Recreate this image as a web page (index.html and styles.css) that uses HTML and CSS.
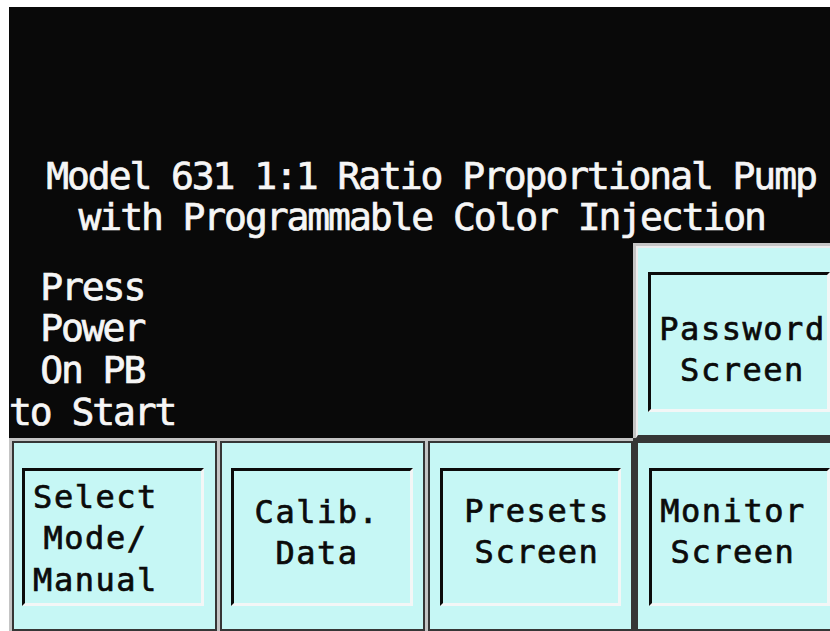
FILE: index.html
```html
<!DOCTYPE html>
<html lang="en">
<head>
<meta charset="utf-8">
<title>Model 631 Pump</title>
<link rel="stylesheet" href="styles.css">
</head>
<body>
<div class="screen">
  <div class="title">
    <div class="title-line title-first">Model 631 1:1 Ratio Proportional Pump</div>
    <div class="title-line title-second">with Programmable Color Injection</div>
  </div>

  <div class="prompt">Press<br>Power<br>On PB<br>to Start</div>

  <div class="key key-raised key-password">
    <div class="face"><div class="frame"><div class="label">Password<br>Screen</div></div></div>
  </div>

  <div class="key key-bottom key-mode">
    <div class="face"><div class="frame"><div class="label">Select<br>Mode/<br>Manual</div></div></div>
  </div>
  <div class="key key-bottom key-calib">
    <div class="face"><div class="frame"><div class="label">Calib.<br>Data</div></div></div>
  </div>
  <div class="key key-bottom key-presets">
    <div class="face"><div class="frame"><div class="label">Presets<br>Screen</div></div></div>
  </div>
  <div class="key key-bottom key-monitor">
    <div class="face"><div class="frame"><div class="label">Monitor<br>Screen</div></div></div>
  </div>
</div>
</body>
</html>
```

FILE: styles.css
```css
html, body {
  margin: 0;
  padding: 0;
  background: #ffffff;
  overflow: hidden;
}

/* 320x240 panel shown at 2.6x: 832x624 */
.screen {
  margin: 7px 0 0 9px;
  width: 832px;
  height: 624px;
  background: #090909;
  display: grid;
  grid-template-columns: repeat(4, 208px);
  grid-template-rows: 236px 195px 193px;
  font-family: "DejaVu Sans Mono", "Liberation Mono", monospace;
}

/* white panel text */
.title,
.prompt {
  color: #f6f6f6;
  font-size: 38px;
  line-height: 41.6px;
  letter-spacing: -2.08px;
  white-space: nowrap;
  -webkit-text-stroke: 0.7px #f6f6f6;
}

.title {
  grid-column: 1 / -1;
  grid-row: 1;
  padding-top: 148.5px;
  text-align: center;
}

.title-first {
  padding-left: 12px;
}

.title-second {
  padding-right: 6.6px;
}

.prompt {
  grid-column: 1;
  grid-row: 2;
  width: 166.4px;
  padding-top: 23.75px;
  text-align: center;
}

/* soft keys */
.key {
  display: flex;
  border-top: 3px solid #c4c4c4;
  border-left: 3px solid #c4c4c4;
}

.key-password {
  grid-column: 4;
  grid-row: 2;
}

.key-bottom {
  grid-row: 3;
}

.key-monitor {
  border-top-color: #363636;
  border-left-color: #363636;
}

.face {
  flex: 1;
  display: flex;
  background: #c6f7f5;
  border: 2px solid #363636;
  padding: 25px 10px 23px 10px;
}

.key-raised .face {
  border-top-color: #ececec;
  border-left-color: #ececec;
  border-bottom-width: 3px;
  padding: 24px 9px 23px 10px;
}

.key-mode .face { padding-left: 8px; padding-right: 11px; }
.key-calib .face { padding-left: 9px; }
.key-monitor .face { padding-left: 11px; padding-right: 9px; }

.frame {
  flex: 1;
  border-style: solid;
  border-width: 3px;
  border-color: #0b0b0b #f3f6f6 #f3f6f6 #0b0b0b;
}

.label {
  color: #0b0b0b;
  font-size: 32px;
  line-height: 41.6px;
  letter-spacing: 1.536px;
  white-space: nowrap;
  text-align: center;
  -webkit-text-stroke: 0.7px #0b0b0b;
}

.key-password .label { padding-top: 33.5px; padding-left: 7px; }
.key-mode .label { padding-top: 5.5px; padding-right: 35px; }
.key-calib .label { padding-top: 20.5px; padding-right: 10px; }
.key-presets .label { padding-top: 19.5px; padding-left: 13px; }
.key-monitor .label { padding-top: 19.5px; padding-right: 13px; }
```
